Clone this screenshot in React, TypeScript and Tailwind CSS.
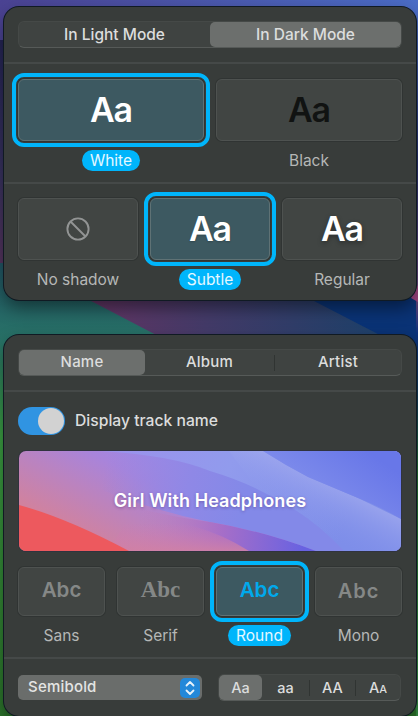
import type { ReactNode } from "react";

const boxBase =
  "flex w-full items-center justify-center rounded-[6px] border shadow-[0_0_0_1px_rgba(25,28,27,0.22)]";

function Option({
  label,
  selected,
  short,
  children,
}: {
  label: string;
  selected?: boolean;
  short?: boolean;
  children: ReactNode;
}) {
  return (
    <div className="flex min-w-0 flex-1 flex-col items-center">
      <div
        className={`${boxBase} ${short ? "h-[49px]" : "h-[62px]"} ${
          selected
            ? "border-[#5f7275] bg-[#3d5961] outline-4 outline-offset-[2px] outline-[#00b5fb]"
            : "border-[#4e5250] bg-[#414543]"
        }`}
      >
        {children}
      </div>
      <div
        className={`mt-[9px] flex h-[21px] items-center rounded-full px-2 text-[15.5px] ${
          selected ? "bg-[#00b5fb] text-[#e5f8ff]" : "text-[#b5b7b6]"
        }`}
      >
        {label}
      </div>
    </div>
  );
}

function Divider() {
  return <div className="h-[2px] w-full shrink-0 bg-[#454948]" />;
}

function Wallpaper() {
  return (
    <svg className="absolute inset-0" width="418" height="716" viewBox="0 0 418 716">
      <defs>
        <linearGradient id="top" x1="0" x2="1">
          <stop offset="0" stopColor="#4b4393" />
          <stop offset="1" stopColor="#4b6dc7" />
        </linearGradient>
        <linearGradient id="left" x1="0" y1="36" x2="0" y2="265" gradientUnits="userSpaceOnUse">
          <stop offset="0" stopColor="#242454" />
          <stop offset=".6" stopColor="#38325f" />
          <stop offset="1" stopColor="#55355e" />
        </linearGradient>
        <linearGradient id="green" x1="0" y1="263" x2="0" y2="716" gradientUnits="userSpaceOnUse">
          <stop offset="0" stopColor="#215564" />
          <stop offset=".17" stopColor="#287267" />
          <stop offset=".38" stopColor="#3c9f43" />
          <stop offset="1" stopColor="#2c742b" />
        </linearGradient>
        <linearGradient id="band" x1="90" x2="380" y1="310" y2="330" gradientUnits="userSpaceOnUse">
          <stop offset="0" stopColor="#633564" />
          <stop offset=".4" stopColor="#443b69" />
          <stop offset="1" stopColor="#1e416b" />
        </linearGradient>
        <linearGradient id="right" x1="0" y1="20" x2="0" y2="716" gradientUnits="userSpaceOnUse">
          <stop offset="0" stopColor="#4466bd" />
          <stop offset=".2" stopColor="#252e6c" />
          <stop offset=".4" stopColor="#694579" />
          <stop offset=".45" stopColor="#0b317b" />
          <stop offset=".55" stopColor="#123c54" />
          <stop offset=".65" stopColor="#246d30" />
          <stop offset="1" stopColor="#379044" />
        </linearGradient>
      </defs>
      <path d="M0 0H418V265H0Z" fill="url(#left)" />
      <path d="M0 0H418V40H0Z" fill="url(#top)" />
      <path d="M0 263H418V716H0Z" fill="url(#green)" />
      <path d="M20 265L93 302L162 338L180 347H418V265Z" fill="url(#band)" />
      <path d="M230 257L316 302L376 333L410 352H418V257Z" fill="#0a3376" />
      <path d="M416 20H418V716H416Z" fill="url(#right)" />
      <path d="M411 298L418 302V285Z" fill="#a04783" />
    </svg>
  );
}

function PreviewArt() {
  return (
    <svg className="absolute inset-0" width="382" height="100" viewBox="0 0 382 100">
      <defs>
        <linearGradient id="base" x1="150" y1="-5" x2="95" y2="100" gradientUnits="userSpaceOnUse">
          <stop offset="0" stopColor="#9b8aea" />
          <stop offset=".35" stopColor="#a884db" />
          <stop offset="1" stopColor="#d0829f" />
        </linearGradient>
        <linearGradient id="middle" x1="85" x2="225" y1="20" y2="50" gradientUnits="userSpaceOnUse">
          <stop offset="0" stopColor="#9686e2" stopOpacity="0" />
          <stop offset=".6" stopColor="#8f88e6" />
          <stop offset="1" stopColor="#8389e8" />
        </linearGradient>
        <linearGradient id="upper" x1="80" x2="320" y1="0" y2="90" gradientUnits="userSpaceOnUse">
          <stop offset="0" stopColor="#9c90ec" />
          <stop offset=".5" stopColor="#919bed" />
          <stop offset="1" stopColor="#7e8ee9" />
        </linearGradient>
        <linearGradient id="sheen" x1="315" x2="292" y1="32" y2="78" gradientUnits="userSpaceOnUse">
          <stop offset="0" stopColor="#a3abee" stopOpacity=".75" />
          <stop offset="1" stopColor="#8594ec" stopOpacity="0" />
        </linearGradient>
        <linearGradient id="blue" x1="285" y1="30" x2="320" y2="-20" gradientUnits="userSpaceOnUse">
          <stop offset="0" stopColor="#7c8aeb" />
          <stop offset="1" stopColor="#6877e8" />
        </linearGradient>
        <linearGradient id="violet" x1="120" x2="285" y1="85" y2="94" gradientUnits="userSpaceOnUse">
          <stop offset="0" stopColor="#c77eae" stopOpacity="0" />
          <stop offset=".5" stopColor="#a66ec8" />
          <stop offset="1" stopColor="#6862e1" />
        </linearGradient>
        <linearGradient id="rose" x1="0" x2="0" y1="72" y2="104" gradientUnits="userSpaceOnUse">
          <stop offset="0" stopColor="#ca7bb6" stopOpacity="0" />
          <stop offset="1" stopColor="#d181a3" />
        </linearGradient>
      </defs>
      <rect width="382" height="100" fill="url(#base)" />
      <path d="M65 0H382V100H297Q244 80 191 71Q120 57 50 25Z" fill="url(#middle)" />
      <path d="M81 0Q152 4 191 20Q218 28 240 39Q290 62 325 100H382V0Z" fill="url(#upper)" />
      <path d="M210 0H244Q266 14 289 26L339 47L382 68V100H326Q285 58 239 39Z" fill="url(#sheen)" />
      <path d="M244 0Q266 14 289 26L339 47Q362 56 382 68V0Z" fill="url(#blue)" />
      <path d="M90 50Q140 64 191 71Q244 80 297 100H90Z" fill="url(#violet)" />
      <path d="M110 65Q180 68 230 100H90Z" fill="url(#rose)" />
      <path d="M0 54Q48 67 110 100H0Z" fill="#ed595e" />
    </svg>
  );
}

const segment = "flex items-center justify-center rounded-[5px] text-[#dcdddd]";
const track =
  "flex h-[27px] shrink-0 items-center rounded-[6px] border border-[#454947] border-b-[#565a58] bg-[#3f4341]";
const panel =
  "relative flex w-[412px] shrink-0 flex-col overflow-hidden rounded-[15px] bg-[#383c3a] shadow-[0_0_0_1px_#101a23,0_8px_18px_rgba(0,0,0,0.45)]";
const sample = "relative -top-px text-[34px] font-semibold tracking-[-1.2px]";

export default function App() {
  return (
    <div className="relative h-[716px] w-[418px] overflow-hidden bg-[#20244f] font-['Inter','Liberation_Sans',sans-serif] text-[15px]">
      <Wallpaper />
      <div className="relative flex flex-col gap-[35px] pt-[7px] pl-1">
        <section className={`${panel} h-[293px]`}>
          <div className={`${track} mx-[14px] mt-[14px] text-[15.5px] font-medium`}>
            <div className={`${segment} h-full flex-1`}>In Light Mode</div>
            <div className={`${segment} h-[25px] flex-1 bg-[#6c6f6d]`}>In Dark Mode</div>
          </div>
          <div className="mt-[14px]"><Divider /></div>
          <div className="mt-[15px] flex gap-3 px-[14px]">
            <Option label="White" selected>
              <span className={`${sample} text-white`}>Aa</span>
            </Option>
            <Option label="Black">
              <span className={`${sample} text-[#111312]`}>Aa</span>
            </Option>
          </div>
          <div className="mt-[11px]"><Divider /></div>
          <div className="mt-[14px] flex gap-3 px-[14px]">
            <Option label="No shadow">
              <svg width="24" height="24" viewBox="0 0 24 24" fill="none" stroke="#929494" strokeWidth="1.9">
                <circle cx="12" cy="12" r="10.6" />
                <path d="M4.5 4.5L19.5 19.5" />
              </svg>
            </Option>
            <Option label="Subtle" selected>
              <span className={`${sample} text-white [text-shadow:0_1px_2px_rgba(0,0,0,.2)]`}>Aa</span>
            </Option>
            <Option label="Regular">
              <span className={`${sample} text-white [text-shadow:0_2px_5px_rgba(0,0,0,.35)]`}>Aa</span>
            </Option>
          </div>
        </section>

        <section className={`${panel} h-[381px]`}>
          <div className={`${track} mx-[14px] mt-[14px] font-medium tracking-[0.2px]`}>
            <div className={`${segment} h-[25px] w-[126px] bg-[#6c6f6d]`}>Name</div>
            <div className={`${segment} h-full flex-1`}>Album</div>
            <div className="h-4 w-px bg-[#303432]" />
            <div className={`${segment} h-full w-[126px]`}>Artist</div>
          </div>
          <div className="mt-[14px]"><Divider /></div>
          <div className="mt-[15px] flex h-7 items-center gap-[10px] px-[14px]">
            <div className="flex h-7 w-[47px] items-center justify-end rounded-full bg-[#3094e2] pr-px">
              <div className="h-[26px] w-[26px] rounded-full bg-[#d2d2d2]" />
            </div>
            <span className="text-[15.7px] font-medium text-[#dcdddd]">Display track name</span>
          </div>
          <div className="relative mx-[15px] mt-4 flex h-[100px] shrink-0 items-center justify-center overflow-hidden rounded-[7px] shadow-[0_0_0_1px_#30333f]">
            <PreviewArt />
            <span className="relative -top-px text-[18px] font-semibold tracking-[0.1px] whitespace-nowrap text-white [text-shadow:0_1px_3px_rgba(70,30,100,.4)]">Girl With Headphones</span>
          </div>
          <div className="mt-4 flex gap-3 px-[14px]">
            <Option label="Sans" short>
              <span className="relative -top-px text-[20.5px] font-semibold text-[#858887]">Abc</span>
            </Option>
            <Option label="Serif" short>
              <span className="relative -top-px font-['Liberation_Serif',serif] text-[23px] font-bold text-[#858887]">Abc</span>
            </Option>
            <Option label="Round" selected short>
              <span className="relative -top-px text-[20.5px] font-semibold text-[#00a9ec]">Abc</span>
            </Option>
            <Option label="Mono" short>
              <span className="relative -top-px text-[20px] font-semibold tracking-[1px] text-[#858887]">Abc</span>
            </Option>
          </div>
          <div className="mt-[11px]"><Divider /></div>
          <div className="mt-[15px] flex items-center gap-4 px-[14px] font-medium">
            <div className="flex h-[25px] w-[184px] items-center justify-between rounded-[5px] bg-[#6a6d6b] pr-[2px] pl-[10px] tracking-[0.2px] text-[#e4e5e4]">
              <span>Semibold</span>
              <div className="flex h-5 w-5 items-center justify-center rounded-[5px] bg-[#2388d9]">
                <svg width="12" height="16" viewBox="0 0 12 16" fill="none" stroke="#e7f2fa" strokeWidth="1.8" strokeLinecap="round" strokeLinejoin="round">
                  <path d="M2.5 5.5L6 2L9.5 5.5M2.5 10.5L6 14L9.5 10.5" />
                </svg>
              </div>
            </div>
            <div className={`${track} w-[183px] text-[14.5px]`}>
              <div className={`${segment} h-[25px] w-[43px] bg-[#6c6f6d]`}>Aa</div>
              <div className={`${segment} w-[47px]`}>aa</div>
              <div className="h-4 w-px bg-[#303432]" />
              <div className={`${segment} w-[45px]`}>AA</div>
              <div className="h-4 w-px bg-[#303432]" />
              <div className="flex w-[44px] items-baseline justify-center text-[#dcdddd]">A<span className="text-[11px]">A</span></div>
            </div>
          </div>
        </section>
      </div>
    </div>
  );
}
